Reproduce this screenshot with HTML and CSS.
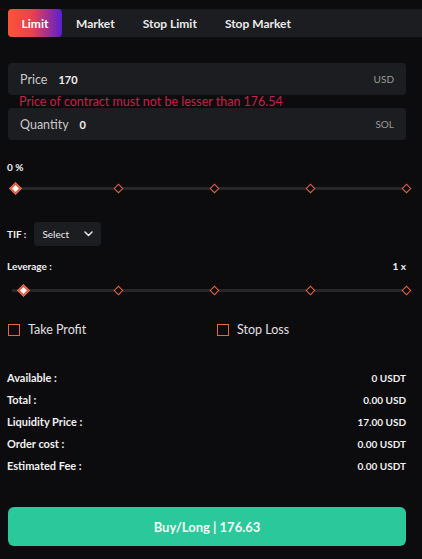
FILE: index.html
```html
<!DOCTYPE html>
<html>
<head>
<meta charset="utf-8">
<link rel="stylesheet" href="styles.css">
</head>
<body>
<div class="panel">
  <div class="tabs">
    <div class="tab active">Limit</div>
    <div class="tab">Market</div>
    <div class="tab">Stop Limit</div>
    <div class="tab">Stop Market</div>
  </div>

  <div class="form">
    <div class="field">
      <span class="flabel">Price</span>
      <span class="fvalue">170</span>
      <span class="funit">USD</span>
    </div>
    <div class="error">Price of contract must not be lesser than 176.54</div>
    <div class="field">
      <span class="flabel">Quantity</span>
      <span class="fvalue">0</span>
      <span class="funit">SOL</span>
    </div>

    <div class="pct">0 %</div>
    <div class="slider slider1">
      <div class="track"></div>
      <span class="mark"><span class="dot handle"></span></span>
      <span class="mark"><span class="dot"></span></span>
      <span class="mark"><span class="dot"></span></span>
      <span class="mark"><span class="dot"></span></span>
      <span class="mark"><span class="dot"></span></span>
    </div>

    <div class="tif">
      <span class="tlabel">TIF :</span>
      <div class="select">
        <span>Select</span>
        <svg width="9" height="6" viewBox="0 0 9 6"><path d="M1 1l3.5 3.5L8 1" fill="none" stroke="#e6e6e6" stroke-width="1.5" stroke-linecap="round" stroke-linejoin="round"/></svg>
      </div>
    </div>

    <div class="lev">
      <span>Leverage :</span>
      <span>1 x</span>
    </div>
    <div class="slider slider2">
      <div class="track"></div>
      <span class="mark"><span class="dot handle"></span></span>
      <span class="mark"><span class="dot"></span></span>
      <span class="mark"><span class="dot"></span></span>
      <span class="mark"><span class="dot"></span></span>
      <span class="mark"><span class="dot"></span></span>
    </div>

    <div class="checks">
      <label class="check"><span class="box"></span>Take Profit</label>
      <label class="check"><span class="box"></span>Stop Loss</label>
    </div>

    <div class="info">
      <div class="row"><span class="rl">Available :</span><span>0 USDT</span></div>
      <div class="row"><span class="rl">Total :</span><span>0.00 USD</span></div>
      <div class="row"><span class="rl">Liquidity Price :</span><span>17.00 USD</span></div>
      <div class="row"><span class="rl">Order cost :</span><span>0.00 USDT</span></div>
      <div class="row"><span class="rl">Estimated Fee :</span><span>0.00 USDT</span></div>
    </div>

    <button class="buy">Buy/Long | 176.63</button>
  </div>
</div>
</body>
</html>
```
FILE: styles.css
```css
* { box-sizing: border-box; }
html, body {
  margin: 0;
  padding: 0;
  background: #0c0c0e;
  color: #f0f0f0;
  font-family: "Lato", "Open Sans", sans-serif;
}
.panel {
  width: 422px;
  height: 559px;
  padding-top: 9px;
  overflow: hidden;
}
.tabs {
  display: flex;
  margin-left: 8px;
  height: 28px;
  background: #1c1d20;
  border-radius: 4px 0 0 4px;
}
.tab {
  display: flex;
  align-items: center;
  font-size: 12px;
  font-weight: 700;
  color: #eaeaea;
  padding: 0 14px;
}
.tab.active {
  width: 54px;
  justify-content: center;
  padding: 0;
  border-radius: 4px;
  background: linear-gradient(90deg, #fb5436 0%, #e9414f 45%, #5a1fd0 100%);
  color: #fff;
}
.form {
  padding: 26px 16px 0 8px;
}
.field {
  display: flex;
  align-items: center;
  height: 32px;
  background: #1c1d20;
  border-radius: 4px;
  padding: 0 12px;
}
.flabel {
  font-size: 12.5px;
  color: #c9c9c9;
  margin-right: 11px;
}
.fvalue {
  font-size: 11px;
  font-weight: 700;
  color: #f0f0f0;
  flex: 1;
}
.funit {
  font-size: 10px;
  color: #9a9a9a;
}
.error {
  font-size: 12.5px;
  color: #c4224a;
  padding-left: 11px;
  height: 13px;
  line-height: 13px;
}
.pct {
  margin-top: 20px;
  margin-left: -1px;
  font-size: 10px;
  font-weight: 700;
  height: 14px;
  line-height: 14px;
}
.slider {
  position: relative;
  display: flex;
  justify-content: space-between;
  align-items: center;
  height: 14px;
  margin-top: 7px;
  margin-right: -4.5px;
  padding-left: 10.5px;
}
.track {
  position: absolute;
  left: 6px;
  right: 4px;
  top: 6px;
  height: 3px;
  background: #262628;
}
.slider2 .track { left: 4px; }
.mark {
  position: relative;
  width: 9px;
  height: 14px;
  display: flex;
  align-items: center;
  justify-content: center;
}
.dot {
  width: 7px;
  height: 7px;
  transform: rotate(45deg);
  border: 1.3px solid #e8673c;
  background: #0c0c0e;
}
.dot.handle {
  width: 9px;
  height: 9px;
  flex: 0 0 auto;
  background: #fff;
  border: 2px solid #e8583a;
}
.slider1 .dot.handle {
  transform: translateX(-8px) rotate(45deg);
}
.tif {
  display: flex;
  align-items: center;
  margin-top: 27px;
  margin-left: -1px;
}
.tlabel {
  font-size: 10px;
  font-weight: 700;
  margin-right: 8px;
}
.select {
  display: flex;
  align-items: center;
  justify-content: space-between;
  width: 67px;
  height: 24px;
  background: #1c1d20;
  border-radius: 4px;
  padding: 0 8px;
  font-size: 10px;
  color: #ececec;
}
.lev {
  display: flex;
  justify-content: space-between;
  align-items: center;
  margin-top: 13px;
  margin-left: -1px;
  font-size: 10px;
  font-weight: 700;
  height: 14px;
}
.slider2 {
  margin-top: 10px;
}
.checks {
  display: flex;
  margin-top: 25px;
}
.check {
  display: flex;
  align-items: center;
  flex: 0 0 auto;
  width: 209px;
  font-size: 12.5px;
  color: #e0e0e0;
}
.check:last-child { width: auto; }
.box {
  width: 12px;
  height: 12px;
  border: 1.3px solid #e8673c;
  margin-right: 8px;
}
.info {
  margin-top: 34px;
  margin-left: -1px;
  display: flex;
  flex-direction: column;
  gap: 8px;
}
.row {
  display: flex;
  justify-content: space-between;
  align-items: center;
  font-size: 10px;
  font-weight: 700;
  height: 14px;
  line-height: 14px;
}
.rl { font-size: 11px; }
.buy {
  display: block;
  width: 100%;
  height: 39px;
  margin-top: 34px;
  border: none;
  border-radius: 6px;
  background: #2ac89a;
  color: #f4fbf8;
  font-family: inherit;
  font-size: 13px;
  font-weight: 700;
}
```
